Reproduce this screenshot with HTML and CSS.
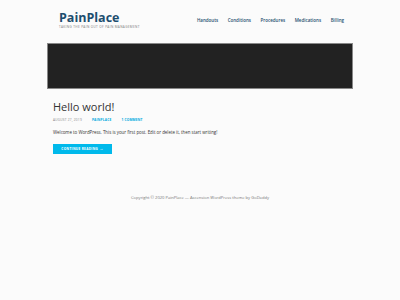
FILE: index.html
```html
<!DOCTYPE html>
<html>
<head>
<meta charset="utf-8">
<link rel="stylesheet" href="styles.css">
</head>
<body>
<div class="page">
  <header class="site-header">
    <div class="branding">
      <div class="site-title">PainPlace</div>
      <div class="tagline">Taking the pain out of pain management</div>
    </div>
    <nav class="nav">
      <a>Handouts</a>
      <a>Conditions</a>
      <a>Procedures</a>
      <a>Medications</a>
      <a>Billing</a>
    </nav>
  </header>
  <div class="hero"></div>
  <article class="post">
    <h1 class="post-title">Hello world!</h1>
    <div class="meta">
      <span class="date">August 27, 2019</span>
      <span class="author">PainPlace</span>
      <span class="comments">1 Comment</span>
    </div>
    <p class="excerpt">Welcome to WordPress. This is your first post. Edit or delete it, then start writing!</p>
    <a class="button">Continue Reading <span class="arrow">→</span></a>
  </article>
  <footer class="footer">Copyright © 2020 PainPlace — Ascension WordPress theme by GoDaddy</footer>
</div>
</body>
</html>
```
FILE: styles.css
```css
html, body {
  margin: 0;
  padding: 0;
  background: #fbfbfb;
  font-family: "Open Sans", "Liberation Sans", sans-serif;
}
.page {
  width: 306px;
  margin: 0 auto;
}
.site-header {
  display: flex;
  justify-content: space-between;
  align-items: flex-start;
  padding: 10px 9px 0 12px;
  box-sizing: border-box;
  height: 43px;
}
.site-title {
  font-size: 12.5px;
  font-weight: 700;
  color: #1d4e6f;
  line-height: 15px;
}
.tagline {
  font-size: 3.1px;
  text-transform: uppercase;
  letter-spacing: 0.35px;
  color: #777;
}
.nav {
  display: flex;
  gap: 9.5px;
  padding-top: 7px;
}
.nav a {
  font-size: 4.5px;
  font-weight: 600;
  color: #1d4e6f;
}
.hero {
  height: 44px;
  background: #222;
  border: 1px solid #888;
}
.post {
  padding: 10px 6px 0;
}
.post-title {
  margin: 0;
  font-size: 11px;
  font-weight: 400;
  color: #333;
  line-height: 15px;
}
.meta {
  margin-top: 4px;
  display: flex;
  gap: 10px;
  font-size: 3.2px;
  text-transform: uppercase;
  letter-spacing: 0.2px;
}
.date { color: #888; }
.author, .comments { color: #00a9e0; font-weight: 700; }
.excerpt {
  margin: 7px 0 0;
  font-size: 4.4px;
  color: #333;
}
.button {
  display: block;
  margin-top: 9px;
  width: 59px;
  height: 10px;
  line-height: 10px;
  text-align: center;
  background: #00b9eb;
  color: #fff;
  font-size: 3.2px;
  font-weight: 700;
  text-transform: uppercase;
  letter-spacing: 0.3px;
}
.arrow { font-size: 4px; }
.footer {
  margin-top: 41px;
  text-align: center;
  font-size: 4.1px;
  color: #777;
}
```
